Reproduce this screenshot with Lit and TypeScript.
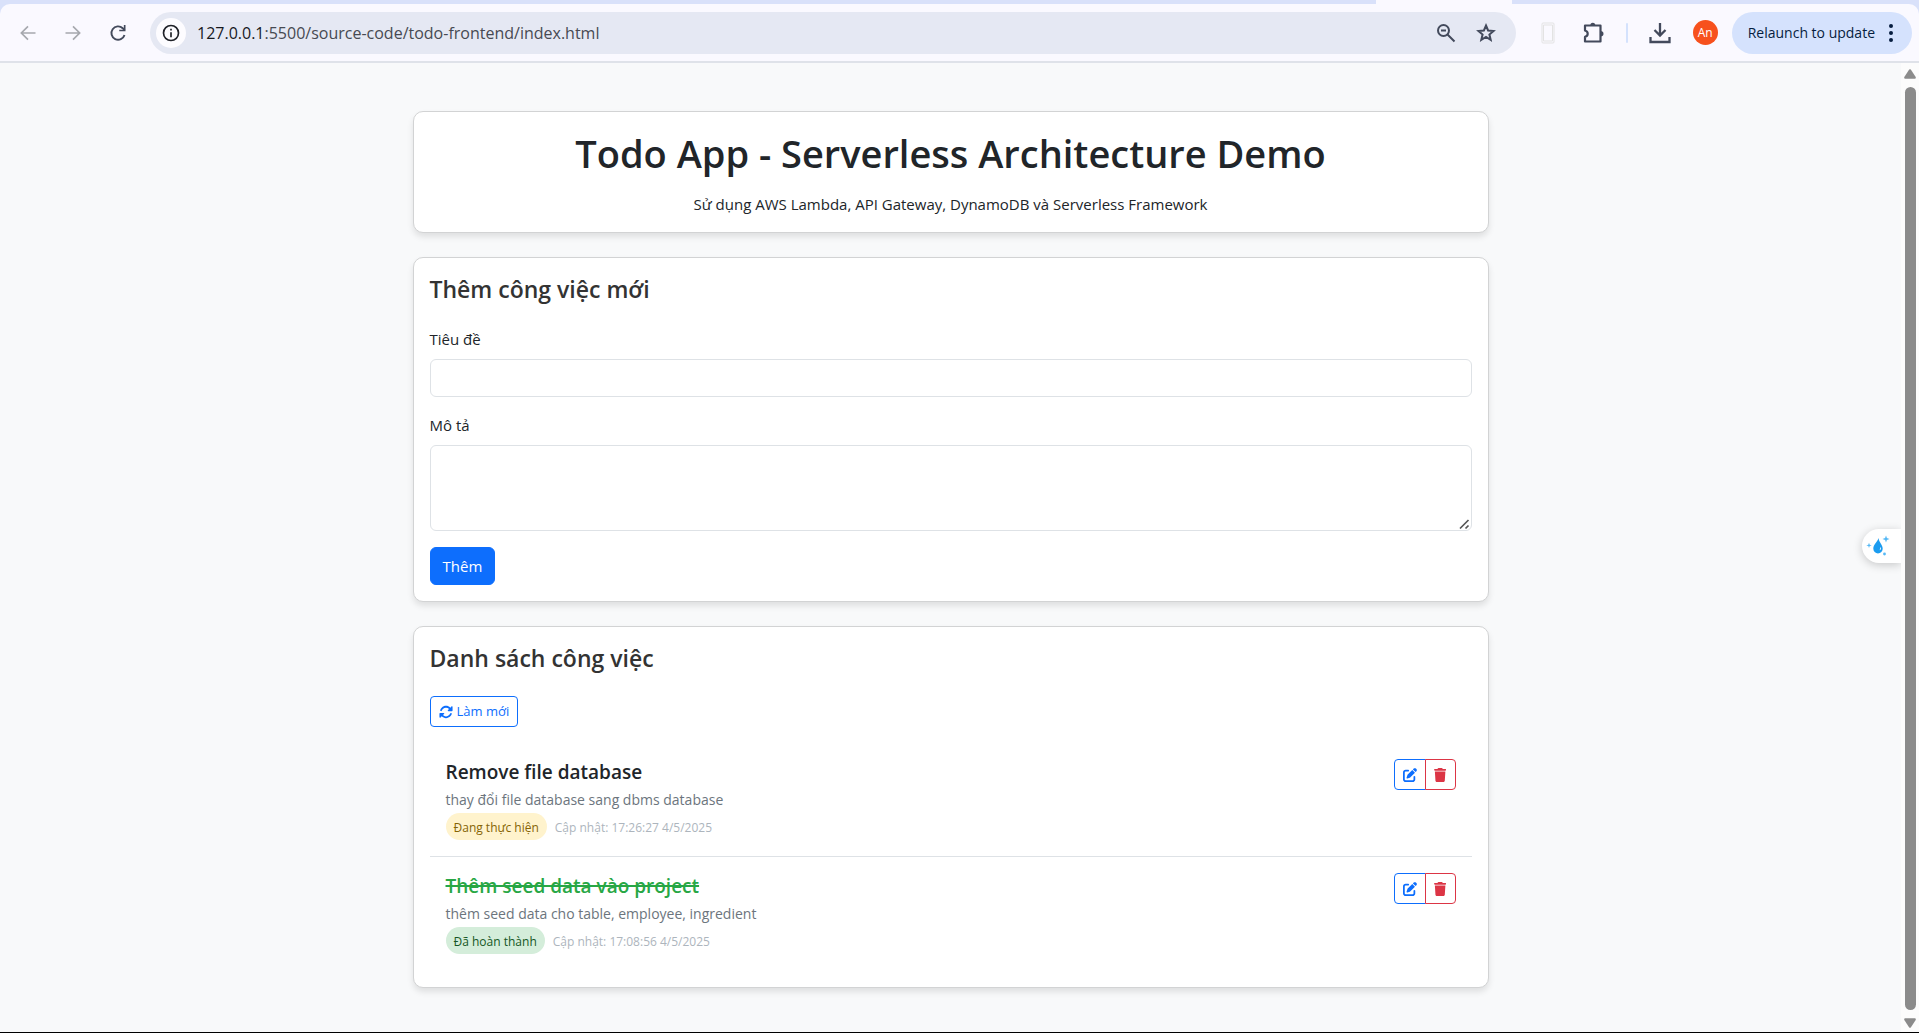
import { LitElement, html, css, svg } from "lit";
import { customElement, property, state } from "lit/decorators.js";

interface Todo {
  id: number;
  title: string;
  description: string;
  done: boolean;
  updated: string;
}

const ICONS = {
  back: svg`<path d="M21 12H4M12 4l-8 8 8 8" fill="none" stroke="currentColor" stroke-width="2"/>`,
  forward: svg`<path d="M3 12h17M12 4l8 8-8 8" fill="none" stroke="currentColor" stroke-width="2"/>`,
  reload: svg`<path d="M19.800 14.300A8 8 0 1 1 17.700 6.300L20 8.500" fill="none" stroke="currentColor" stroke-width="2.300"/><path d="M21 2.500v7.500h-7.500V8H19V2.500z" fill="currentColor"/>`,
  info: svg`<circle cx="12" cy="12" r="9" fill="none" stroke="currentColor" stroke-width="2"/><path d="M11 11h2v6h-2zM11 7h2v2h-2z" fill="currentColor"/>`,
  zoomOut: svg`<circle cx="9.500" cy="9.500" r="5.500" fill="none" stroke="currentColor" stroke-width="2"/><path d="M13.500 13.500 20.500 20.500M7 9.500h5" fill="none" stroke="currentColor" stroke-width="2"/>`,
  star: svg`<path d="m12 4.500 2.100 5 5.400.5-4.100 3.500 1.300 5.300-4.700-2.800-4.700 2.800 1.300-5.300L4.500 10l5.400-.5z" fill="none" stroke="currentColor" stroke-width="2"/>`,
  device: svg`<rect x="6" y="2" width="12" height="20" rx="1" fill="none" stroke="currentColor" stroke-width="1"/><path d="M7.500 4h9v16h-9z" fill="none" stroke="currentColor" stroke-width="1"/>`,
  puzzle: svg`<path d="M4 4.500h15.500v16H4v-4.600c1.700-.5 2.700-1.700 2.700-3.200S5.700 10 4 9.500z" fill="none" stroke="currentColor" stroke-width="2.200" stroke-linejoin="round"/><path d="M9.300 4.500a2.500 2.700 0 0 1 5 0zM19.500 10a3 2.700 0 0 1 0 5.400z" fill="currentColor"/>`,
  download: svg`<path d="M12 2v12.500M6.500 9l5.500 5.500L17.500 9M2.500 16v5h19v-5" fill="none" stroke="currentColor" stroke-width="2.300"/>`,
};

const FA = {
  rotate: svg`<path d="M142.900 142.900c62.200-62.200 162.700-62.500 225.300-1L327 183c-6.900 6.900-8.900 17.200-5.200 26.200s12.500 14.800 22.200 14.800H472c13.300 0 24-10.700 24-24V72c0-9.700-5.800-18.500-14.800-22.200s-19.300-1.700-26.200 5.200L413.400 96.600c-87.600-86.500-228.700-86.200-315.800 1C73.200 122 55.600 150.700 44.800 181.400c-5.900 16.700 2.900 34.900 19.500 40.800s34.900-2.900 40.800-19.500c7.700-21.800 20.200-42.300 37.800-59.800zM16 312V440c0 9.700 5.800 18.500 14.800 22.200s19.300 1.700 26.200-5.200l41.600-41.600c87.600 86.500 228.700 86.200 315.800-1c24.400-24.400 42.100-53.100 52.900-83.700c5.900-16.700-2.900-34.900-19.500-40.800s-34.900 2.900-40.800 19.500c-7.700 21.800-20.200 42.300-37.800 59.800c-62.200 62.200-162.700 62.500-225.300 1L185 329c6.900-6.900 8.900-17.200 5.200-26.200s-12.500-14.800-22.200-14.800H40c-13.300 0-24 10.700-24 24z"/>`,
  edit: svg`<path d="M471.600 21.700c-21.900-21.900-57.300-21.900-79.200 0L362.300 51.700l97.900 97.900 30.100-30.100c21.900-21.900 21.900-57.300 0-79.200L471.600 21.700zm-299.200 220c-6.100 6.100-10.800 13.600-13.500 21.900l-29.600 88.800c-2.900 8.600-.6 18.100 5.800 24.600s15.900 8.700 24.600 5.800l88.800-29.600c8.200-2.700 15.700-7.400 21.900-13.500L437.700 172.300 339.700 74.300 172.400 241.700zM96 64C43 64 0 107 0 160V416c0 53 43 96 96 96H352c53 0 96-43 96-96V320c0-17.700-14.300-32-32-32s-32 14.300-32 32v96c0 17.700-14.300 32-32 32H96c-17.700 0-32-14.300-32-32V160c0-17.700 14.300-32 32-32h96c17.700 0 32-14.300 32-32s-14.300-32-32-32H96z"/>`,
  trash: svg`<path d="M135.200 17.700L128 32H32C14.300 32 0 46.300 0 64S14.300 96 32 96H416c17.700 0 32-14.300 32-32s-14.300-32-32-32H320l-7.200-14.300C307.400 6.800 296.300 0 284.200 0H163.800c-12.100 0-23.200 6.800-28.600 17.700zM416 128H32L53.200 467c1.600 25.300 22.600 45 47.900 45H346.900c25.300 0 46.300-19.700 47.900-45L416 128z"/>`,
};

@customElement("browser-bar")
class BrowserBar extends LitElement {
  static styles = css`
    :host {
      display: block;
      font-family: "Open Sans", "Noto Sans", sans-serif;
      background: #d9e1fa;
      padding-top: 4px;
      position: relative;
    }
    .tab {
      position: absolute;
      top: 0;
      right: 407px;
      width: 136px;
      height: 4px;
      background: #faf9ff;
    }
    .bar {
      display: flex;
      align-items: center;
      height: 57px;
      padding: 0 7px 0 5px;
      background: #faf9ff;
      border-bottom: 2px solid #dfe2e9;
      border-radius: 10px 10px 0 0;
    }
    button {
      border: 0;
      padding: 0;
      background: none;
      color: #434a5c;
      display: flex;
      align-items: center;
      justify-content: center;
      width: 45px;
      height: 42px;
      flex: none;
      font-family: inherit;
    }
    button.muted {
      color: #a6a8ae;
    }
    button.faint {
      color: #e3e3e3;
    }
    svg {
      width: 20px;
      height: 20px;
    }
    .large {
      width: 24px;
      height: 24px;
    }
    .omnibox {
      flex: 1;
      display: flex;
      align-items: center;
      height: 42px;
      margin: 0 10px;
      padding: 0 10px 0 6px;
      border-radius: 21px;
      background: #e5e8f3;
      min-width: 0;
    }
    .omnibox button {
      width: 40px;
    }
    .omnibox .site {
      width: 30px;
      height: 30px;
      border-radius: 15px;
      background: #fdfcff;
      color: #1f2128;
    }
    .url {
      flex: 1;
      margin: 0 11px;
      font-size: 16px;
      line-height: 24px;
      color: #474a52;
      text-decoration: none;
      white-space: nowrap;
      overflow: hidden;
    }
    .host {
      color: #17191e;
    }
    .divider {
      width: 2px;
      height: 20px;
      margin: 0 10px;
      border-radius: 1px;
      background: #d4e2fd;
    }
    .avatar {
      width: 25px;
      height: 25px;
      border-radius: 50%;
      background: #f7511d;
      color: #fff;
      font-size: 12px;
      line-height: 25px;
    }
    button.update {
      width: auto;
      margin-left: 4px;
      padding: 0 19px 0 16px;
      gap: 14px;
      border-radius: 21px;
      background: #d5e2fd;
      color: #061d3f;
      font-size: 14px;
    }
    .dots {
      width: 4px;
      height: 18px;
    }
  `;

  private glyph(icon: unknown, cls = "") {
    return html`<svg class=${cls} viewBox="0 0 24 24" aria-hidden="true">${icon}</svg>`;
  }

  render() {
    return html`
      <div class="tab"></div>
      <nav class="bar">
        <button class="muted" aria-label="Back">${this.glyph(ICONS.back)}</button>
        <button class="muted" aria-label="Forward">${this.glyph(ICONS.forward)}</button>
        <button aria-label="Reload">${this.glyph(ICONS.reload)}</button>
        <div class="omnibox">
          <button class="site" aria-label="Site information">${this.glyph(ICONS.info)}</button>
          <a class="url" href="#"><span class="host">127.0.0.1</span>:5500/source-code/todo-frontend/index.html</a>
          <button aria-label="Zoom">${this.glyph(ICONS.zoomOut, "large")}</button>
          <button aria-label="Bookmark">${this.glyph(ICONS.star, "large")}</button>
        </div>
        <button class="faint" aria-label="Device">${this.glyph(ICONS.device, "large")}</button>
        <button aria-label="Extensions">${this.glyph(ICONS.puzzle, "large")}</button>
        <span class="divider"></span>
        <button aria-label="Downloads">${this.glyph(ICONS.download, "large")}</button>
        <button aria-label="Profile"><span class="avatar">An</span></button>
        <button class="update">
          Relaunch to update
          <svg class="dots" viewBox="0 0 4 18" aria-hidden="true" fill="currentColor">
            <circle cx="2" cy="2" r="2" /><circle cx="2" cy="9" r="2" /><circle cx="2" cy="16" r="2" />
          </svg>
        </button>
      </nav>
    `;
  }
}

@customElement("todo-item")
class TodoItem extends LitElement {
  @property({ attribute: false }) todo!: Todo;

  static styles = css`
    :host {
      display: flex;
      justify-content: space-between;
      align-items: flex-start;
      padding: 16px;
      border-bottom: 1px solid #dee2e6;
    }
    :host(:last-of-type) {
      border-bottom-color: transparent;
    }
    .title {
      margin: 0 0 4px;
      font-size: 19px;
      line-height: 26px;
      font-weight: 600;
      color: #212529;
    }
    .title.done {
      color: #28a745;
      text-decoration: line-through 2px;
    }
    .description {
      margin: 0 0 3px;
      font-size: 14px;
      line-height: 21px;
      color: #6c757d;
    }
    .meta {
      display: flex;
      align-items: baseline;
      gap: 8px;
      font-size: 12px;
      line-height: 19px;
    }
    .badge {
      padding: 5px 8px 3px;
      border-radius: 14px;
      background: #fff3cd;
      color: #856404;
    }
    .badge.done {
      background: #d4edda;
      color: #155724;
    }
    .time {
      color: #adb5bd;
    }
    .actions {
      display: flex;
    }
    button {
      display: flex;
      align-items: center;
      justify-content: center;
      width: 32px;
      height: 31px;
      padding: 0;
      background: #fff;
      border: 1px solid #0d6efd;
      color: #0d6efd;
      border-radius: 4px 0 0 4px;
    }
    button.delete {
      width: 31px;
      margin-left: -1px;
      border-color: #dc3545;
      color: #dc3545;
      border-radius: 0 4px 4px 0;
    }
    svg {
      height: 14px;
      fill: currentColor;
    }
  `;

  render() {
    const { title, description, done, updated } = this.todo;
    const doneClass = done ? "done" : "";
    return html`
      <div>
        <h5 class="title ${doneClass}">${title}</h5>
        <p class="description">${description}</p>
        <div class="meta">
          <span class="badge ${doneClass}">${done ? "Đã hoàn thành" : "Đang thực hiện"}</span>
          <span class="time">Cập nhật: ${updated}</span>
        </div>
      </div>
      <div class="actions">
        <button class="edit" aria-label="Sửa"><svg viewBox="0 0 512 512">${FA.edit}</svg></button>
        <button class="delete" aria-label="Xóa"><svg viewBox="0 0 448 512">${FA.trash}</svg></button>
      </div>
    `;
  }
}

@customElement("app-root")
class AppRoot extends LitElement {
  @state() private todos: Todo[] = [
    {
      id: 1,
      title: "Remove file database",
      description: "thay đổi file database sang dbms database",
      done: false,
      updated: "17:26:27 4/5/2025",
    },
    {
      id: 2,
      title: "Thêm seed data vào project",
      description: "thêm seed data cho table, employee, ingredient",
      done: true,
      updated: "17:08:56 4/5/2025",
    },
  ];

  static styles = css`
    :host {
      display: flex;
      flex-direction: column;
      box-sizing: border-box;
      min-height: 100vh;
      border-bottom: 1px solid #000;
      background: #f8f9fa;
      color: #212529;
      font-family: "Open Sans", "Noto Sans", sans-serif;
      font-size: 15px;
      line-height: 24px;
    }
    .viewport {
      flex: 1;
      display: flex;
      position: relative;
    }
    main {
      flex: 1;
      padding: 48px 0 44px;
    }
    .container {
      box-sizing: border-box;
      max-width: 1100px;
      margin: 0 auto;
      padding: 0 12px;
      display: flex;
      flex-direction: column;
      gap: 24px;
    }
    .card {
      padding: 16px;
      background: #fff;
      border: 1px solid #d2d3d4;
      border-radius: 10px;
      box-shadow: 0 4px 6px rgba(0, 0, 0, 0.1);
    }
    .hero {
      text-align: center;
    }
    h1 {
      margin: 0 0 14px;
      font-size: 38px;
      line-height: 50px;
      font-weight: 600;
    }
    p {
      margin: 0;
    }
    h2 {
      margin: 0 0 22px;
      font-size: 23px;
      line-height: 31px;
      font-weight: 600;
      color: #333;
    }
    .field {
      margin-bottom: 16px;
    }
    label {
      display: block;
      margin-bottom: 8px;
    }
    input,
    textarea {
      display: block;
      box-sizing: border-box;
      width: 100%;
      height: 38px;
      padding: 6px 12px;
      border: 1px solid #dee2e6;
      border-radius: 6px;
      background: #fff;
      font: inherit;
      color: inherit;
    }
    textarea {
      height: 86px;
      resize: vertical;
    }
    textarea::-webkit-resizer {
      background: url("data:image/svg+xml,%3Csvg xmlns='http://www.w3.org/2000/svg' viewBox='0 0 15 15'%3E%3Cpath d='M4 13.500 12.500 5M9.500 13.500l3-3' stroke='%23555' stroke-width='1.700'/%3E%3C/svg%3E")
        no-repeat right bottom / 15px 15px;
    }
    button {
      font: inherit;
    }
    .primary {
      display: block;
      padding: 6px 12px;
      border: 1px solid #0d6efd;
      border-radius: 6px;
      background: #0d6efd;
      color: #fff;
    }
    .refresh {
      display: flex;
      align-items: center;
      gap: 4px;
      padding: 4px 8px;
      border: 1px solid #0d6efd;
      border-radius: 4px;
      background: #fff;
      color: #0d6efd;
      font-size: 13px;
      line-height: 21px;
    }
    .refresh svg {
      width: 14px;
      height: 14px;
      fill: currentColor;
    }
    .list {
      margin-top: 16px;
    }
    .scrollbar {
      width: 18px;
      display: flex;
      flex-direction: column;
      align-items: center;
      padding: 6px 0 4px;
      gap: 8px;
      box-sizing: border-box;
      background: #fcfcfc;
    }
    .scrollbar svg {
      width: 12px;
      height: 10px;
      fill: #8b8b8b;
    }
    .thumb {
      flex: 1;
      width: 11px;
      border-radius: 6px;
      background: #8b8b8b;
    }
    .floating {
      position: absolute;
      right: 18px;
      top: 466px;
      width: 39px;
      height: 34px;
      padding: 0 0 0 4px;
      border: 0;
      border-radius: 17px 0 0 17px;
      background: #fff;
      box-shadow: 0 2px 10px rgba(0, 0, 0, 0.2);
      clip-path: inset(-20px 0 -20px -20px);
      text-align: left;
    }
    .floating svg {
      display: block;
      width: 24px;
      height: 24px;
    }
  `;

  render() {
    return html`
      <browser-bar></browser-bar>
      <div class="viewport">
        <main>
          <div class="container">
            <header class="card hero">
              <h1>Todo App - Serverless Architecture Demo</h1>
              <p>Sử dụng AWS Lambda, API Gateway, DynamoDB và Serverless Framework</p>
            </header>
            <section class="card">
              <h2>Thêm công việc mới</h2>
              <form @submit=${(e: Event) => e.preventDefault()}>
                <div class="field">
                  <label for="title">Tiêu đề</label>
                  <input id="title" type="text" />
                </div>
                <div class="field">
                  <label for="description">Mô tả</label>
                  <textarea id="description"></textarea>
                </div>
                <button class="primary" type="submit">Thêm</button>
              </form>
            </section>
            <section class="card">
              <h2>Danh sách công việc</h2>
              <button class="refresh" type="button">
                <svg viewBox="0 0 512 512" aria-hidden="true">${FA.rotate}</svg>Làm mới
              </button>
              <div class="list">
                ${this.todos.map((todo) => html`<todo-item .todo=${todo}></todo-item>`)}
              </div>
            </section>
          </div>
        </main>
        <div class="scrollbar" aria-hidden="true">
          <svg viewBox="0 0 12 10"><path d="M5.200.6Q6-.3 6.800.6L11.700 8Q12.200 9.700 10.800 9.700H1.200Q-.2 9.700.3 8z" /></svg>
          <div class="thumb"></div>
          <svg viewBox="0 0 12 10"><path d="M5.200 9.400Q6 10.300 6.800 9.400L11.700 2Q12.200.3 10.800.3H1.200Q-.2.3.3 2z" /></svg>
        </div>
        <button class="floating" type="button" aria-label="Trợ lý">
          <svg viewBox="0 0 24 24" fill="#1b9cf0" aria-hidden="true">
            <path d="M12.500 4C11.500 8 7.300 10.800 7.300 14.500a4.700 4.900 0 0 0 9.400 0C16.700 10.800 13 8.500 12.500 4z" />
            <path d="M14.300 13a2 2 0 0 1-.6 3.300z" fill="#fff" />
            <path d="M20 1.500l.9 2.600 2.600.9-2.600.9L20 8.500l-.9-2.600-2.600-.9 2.600-.9zM3 8.700l.7 2 2 .7-2 .7L3 14.100l-.7-2-2-.7 2-.7z" fill="#55b8f5" />
            <circle cx="18.500" cy="20" r="1.400" fill="#55b8f5" />
          </svg>
        </button>
      </div>
    `;
  }
}
